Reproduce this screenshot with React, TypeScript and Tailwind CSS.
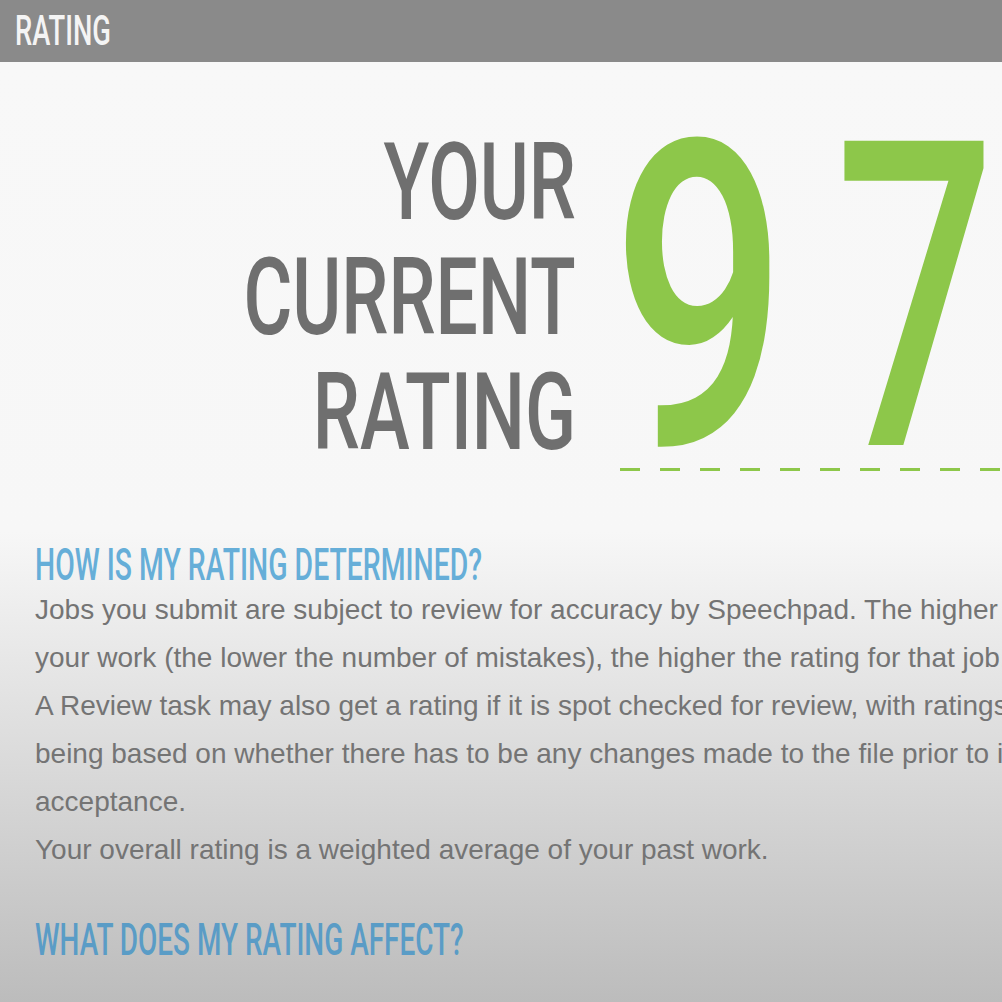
export default function App() {
  const lines = [
    "Jobs you submit are subject to review for accuracy by Speechpad. The higher the quality of",
    "your work (the lower the number of mistakes), the higher the rating for that job.",
    "A Review task may also get a rating if it is spot checked for review, with ratings",
    "being based on whether there has to be any changes made to the file prior to its",
    "acceptance.",
    "Your overall rating is a weighted average of your past work.",
  ];

  return (
    <div className="w-[1002px] h-[1002px] overflow-hidden flex flex-col font-['Roboto',sans-serif]">
      {/* top bar */}
      <div className="h-[62px] shrink-0 bg-[#8a8a8a] flex items-center px-[15px]">
        <span className="inline-block origin-left scale-x-[0.65] font-medium text-[42px] leading-none text-[#f4f4f4]">
          RATING
        </span>
      </div>

      <div className="flex-1 bg-[linear-gradient(to_bottom,#f8f8f8_0%,#f7f7f7_50%,#bcbcbc_100%)] flex flex-col">
        {/* rating block */}
        <div className="flex items-start pt-[56px]">
          <div className="w-[576px] mt-[7px] shrink-0 flex flex-col items-end font-medium text-[107px] leading-[115px] text-[#6f6f6f]">
            <span className="inline-block origin-right scale-x-[0.7]">YOUR</span>
            <span className="inline-block origin-right scale-x-[0.7]">CURRENT</span>
            <span className="inline-block origin-right scale-x-[0.7]">RATING</span>
          </div>
          <div className="flex flex-col ml-[44px] flex-1">
            <div className="h-[345px] mt-[1px] flex items-start text-[#8dc74a] font-medium text-[428px] leading-[360px]">
              <span className="inline-block origin-left scale-x-[0.72] -ml-[8px]">9</span>
              <span className="inline-block origin-left scale-x-[0.66] -ml-[20px]">7</span>
            </div>
            <div className="h-[3px] mt-[4px] bg-[repeating-linear-gradient(90deg,#8dc74a_0px,#8dc74a_20px,transparent_20px,transparent_40px)]" />
          </div>
        </div>

        {/* info */}
        <div className="pl-[35px] pt-[70px] flex flex-col">
          <h2 className="inline-block origin-left scale-x-[0.645] font-medium whitespace-nowrap text-[44px] leading-[48px] text-[#66aed8]">
            HOW IS MY RATING DETERMINED?
          </h2>
          <div className="-mt-[3px] font-['Liberation_Sans',Arial,sans-serif] text-[28px] leading-[48px] text-[#747474] whitespace-nowrap">
            {lines.map((l) => (
              <div key={l}>{l}</div>
            ))}
          </div>
          <h2 className="mt-[42px] inline-block origin-left scale-x-[0.635] font-medium whitespace-nowrap text-[44px] leading-[48px] text-[#5a9cc6]">
            WHAT DOES MY RATING AFFECT?
          </h2>
        </div>
      </div>
    </div>
  );
}
